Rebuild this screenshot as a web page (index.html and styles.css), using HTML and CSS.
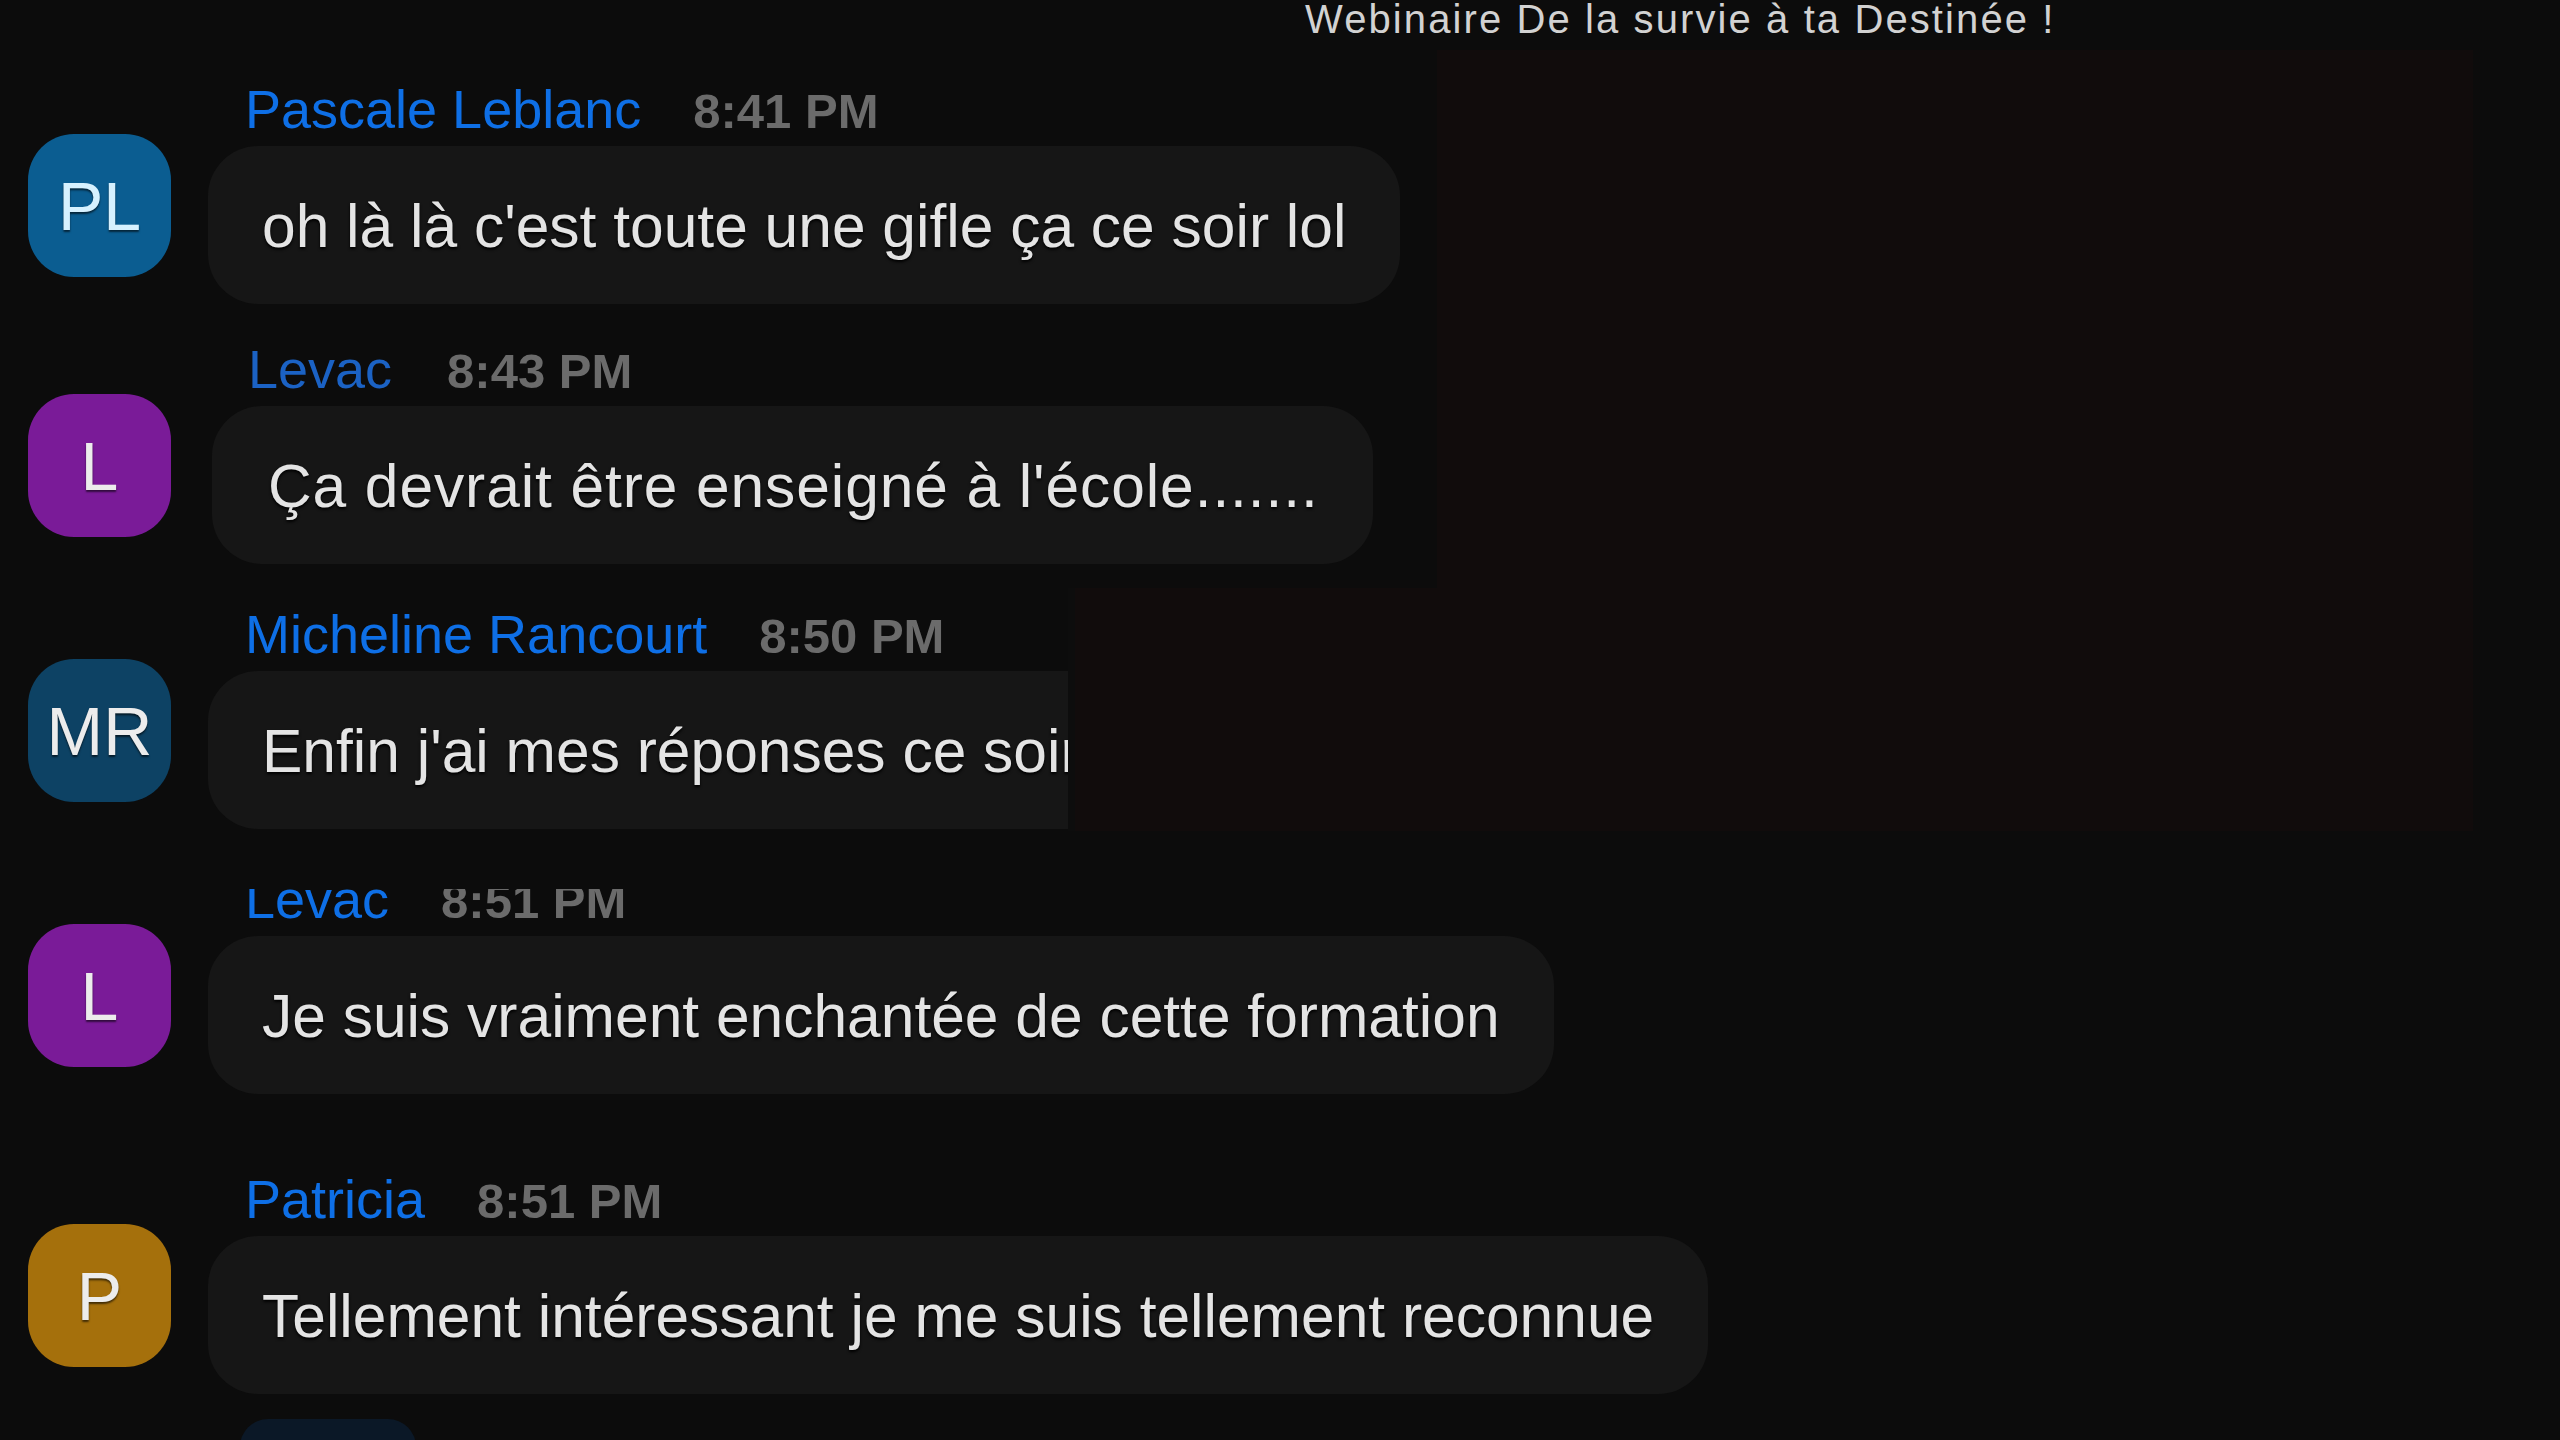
FILE: index.html
```html
<!DOCTYPE html>
<html lang="fr">
<head>
<meta charset="utf-8">
<title>Webinaire</title>
<link rel="stylesheet" href="styles.css">
</head>
<body>
<div class="screen">
  <header class="title">Webinaire De la survie à ta Destinée !</header>

  <div class="overlay overlay-main"></div>
  <div class="overlay overlay-ext"></div>
  <div class="clip-band"></div>

  <main class="chat">
    <section class="msg">
      <div class="avatar av-blue av-pl">PL</div>
      <div class="body">
        <div class="meta"><span class="name">Pascale Leblanc</span><span class="time">8:41 PM</span></div>
        <div class="bubble">oh là là c'est toute une gifle ça ce soir lol</div>
      </div>
    </section>

    <section class="msg">
      <div class="avatar av-purple">L</div>
      <div class="body">
        <div class="meta meta-shift"><span class="name name-dim">Levac</span><span class="time">8:43 PM</span></div>
        <div class="bubble bubble-wide">Ça devrait être enseigné à l'école.......</div>
      </div>
    </section>

    <section class="msg gap-md">
      <div class="avatar av-navy">MR</div>
      <div class="body">
        <div class="meta"><span class="name">Micheline Rancourt</span><span class="time">8:50 PM</span></div>
        <div class="bubble">Enfin j'ai mes réponses ce soir</div>
      </div>
    </section>

    <section class="msg gap-md">
      <div class="avatar av-purple">L</div>
      <div class="body">
        <div class="meta"><span class="name">Levac</span><span class="time">8:51 PM</span></div>
        <div class="bubble">Je suis vraiment enchantée de cette formation</div>
      </div>
    </section>

    <section class="msg gap-lg">
      <div class="avatar av-gold">P</div>
      <div class="body">
        <div class="meta"><span class="name">Patricia</span><span class="time">8:51 PM</span></div>
        <div class="bubble">Tellement intéressant je me suis tellement reconnue</div>
      </div>
    </section>

    <section class="msg next">
      <div class="avatar-spacer"></div>
      <div class="body">
        <div class="meta"><span class="pill"></span></div>
      </div>
    </section>
  </main>
</div>
</body>
</html>
```

FILE: styles.css
```css
html, body {
  margin: 0;
  padding: 0;
  background: #0c0c0c;
}

.screen {
  position: relative;
  width: 2560px;
  height: 1440px;
  overflow: hidden;
  background: #0c0c0c;
  font-family: "Liberation Sans", Arial, Helvetica, sans-serif;
}

.title {
  padding-top: 2px;
  padding-left: 1305px;
  font-size: 40px;
  line-height: 34px;
  letter-spacing: 2.1px;
  color: #d2d2d2;
  white-space: nowrap;
}

.overlay {
  position: absolute;
  background: #110c0c;
}

.overlay-main {
  left: 1437px;
  top: 50px;
  width: 1036px;
  height: 781px;
}

.overlay-ext {
  left: 1068px;
  top: 588px;
  width: 362px;
  height: 243px;
  border-left: 7px solid #0d0d0d;
}

.clip-band {
  position: absolute;
  left: 200px;
  top: 862px;
  width: 520px;
  height: 27px;
  background: #0c0c0c;
}

.chat {
  display: flex;
  flex-direction: column;
  margin-top: 43px;
  padding-left: 28px;
}

.msg {
  display: flex;
  align-items: flex-start;
  gap: 37px;
}

.msg + .msg {
  margin-top: 35px;
}

.msg.gap-md {
  margin-top: 40px;
}

.msg.gap-lg {
  margin-top: 75px;
}

.msg.next {
  margin-top: 25px;
}

.avatar {
  flex: none;
  width: 143px;
  height: 143px;
  margin-top: 55px;
  border-radius: 46px;
  display: flex;
  align-items: center;
  justify-content: center;
  font-size: 68px;
  color: #ececec;
  text-shadow: 0 2px 2px rgba(0, 0, 0, 0.6);
}

.avatar-spacer {
  flex: none;
  width: 143px;
}

.av-blue { background: #0b5d91; }
.av-pl { color: #d6f1ff; }
.av-purple { background: #7a1b98; }
.av-navy { background: #0d4264; }
.av-gold { background: #a5700c; }

.body {
  display: flex;
  flex-direction: column;
  align-items: flex-start;
  gap: 7px;
}

.meta {
  display: flex;
  align-items: baseline;
  gap: 52px;
  padding-left: 37px;
  height: 60px;
  line-height: 60px;
  white-space: nowrap;
}

.meta-shift {
  padding-left: 40px;
  gap: 55px;
}

.name {
  font-size: 54px;
  color: #0e6fe6;
}

.name-dim {
  color: #1b62c4;
}

.time {
  font-size: 49px;
  font-weight: 700;
  color: #6b6b6b;
}

.bubble {
  background: #161616;
  border-radius: 50px;
  padding: 50px 54px 48px;
  font-size: 60.5px;
  line-height: 60px;
  color: #e4e4e4;
  white-space: nowrap;
  text-shadow: 0 2px 3px #000;
}

.bubble-wide {
  margin-left: 4px;
  padding-left: 56px;
  letter-spacing: 0.9px;
}

.pill {
  display: inline-block;
  width: 176px;
  height: 60px;
  margin-left: -5px;
  border-radius: 28px;
  background: #0b1827;
  vertical-align: top;
}
```
